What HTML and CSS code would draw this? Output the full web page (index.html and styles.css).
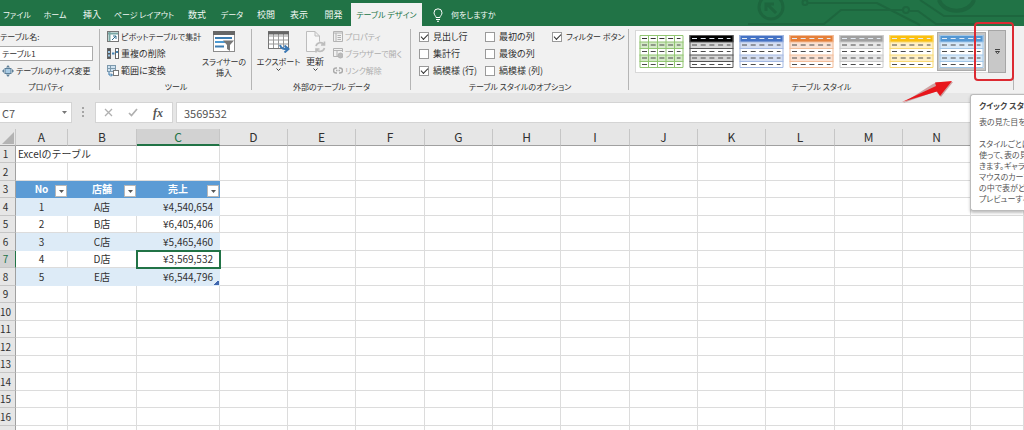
FILE: index.html
```html
<!DOCTYPE html>
<html lang="ja">
<head>
<meta charset="utf-8">
<title>Excelのテーブル</title>
<link rel="stylesheet" href="styles.css">
</head>
<body>
<svg class="defs" aria-hidden="true">
  <symbol id="swatch" viewBox="0 0 44 33">
    <rect class="sw-body" x="0" y="0" width="44" height="33"/>
    <rect class="sw-band" x="0" y="7" width="44" height="6"/>
    <rect class="sw-band" x="0" y="20" width="44" height="6"/>
    <rect class="sw-head" x="0" y="0" width="44" height="7"/>
    <path class="sw-line" d="M0 7H44M0 13.500H44M0 20H44M0 26.500H44M.5 .5H43.500V32.500H.5Z"/>
    <path class="sw-col" d="M9 0V33M18 0V33M26.500 0V33M35 0V33"/>
    <path class="sw-dash-head" d="M2.500 3.500H41" stroke-dasharray="5 3.700"/>
    <path class="sw-dash" d="M2.500 10H41M2.500 16.500H41M2.500 23H41M2.500 29.500H41" stroke-dasharray="5 3.700"/>
  </symbol>
</svg>

<header class="tabbar">
  <svg class="circuit" viewBox="0 0 284 26" aria-hidden="true">
    <g fill="none" stroke="#1d663e" stroke-width="2">
      <circle cx="31" cy="7" r="12" stroke-width="3"/>
      <path d="M36 13L27 4M26 11V4H34" stroke-width="3"/>
      <circle cx="65" cy="2.500" r="2.500"/><path d="M68 3H137L180 25"/>
      <path d="M8 24H84L101 10H162M170 11H178L196 24H236"/>
      <circle cx="166" cy="10" r="3"/>
      <path d="M180 0L204 16H284"/>
      <path d="M199 0a18 14 0 0 0 35 0" stroke-width="4"/>
    </g>
  </svg>
  <nav class="tabs">
    <button class="tab kana">ファイル</button>
    <button class="tab kana">ホーム</button>
    <button class="tab">挿入</button>
    <button class="tab kana">ページ レイアウト</button>
    <button class="tab">数式</button>
    <button class="tab kana">データ</button>
    <button class="tab">校閲</button>
    <button class="tab">表示</button>
    <button class="tab">開発</button>
    <button class="tab tab-active kana">テーブル デザイン</button>
    <button class="tab tell-me kana">
      <svg width="10" height="14" viewBox="0 0 10 14" fill="none" stroke="#fff" aria-hidden="true"><path d="M3 9.500C3 8 1 7 1 4.800a4 4 0 0 1 8 0C9 7 7 8 7 9.500ZM3 11.500H7M4 13.300H6"/></svg>
      何をしますか
    </button>
  </nav>
</header>

<section class="ribbon">
  <div class="group group-props">
    <div class="group-body stack">
      <label class="row kana" for="tname">テーブル名:</label>
      <input class="name-input kana" id="tname" value="テーブル1">
      <button class="cmd cmd-indent kana">
        <svg width="12" height="12" viewBox="0 0 12 12" aria-hidden="true"><rect x="3" y="3.500" width="6" height="5" fill="#a9cbe4" stroke="#5d7f98"/><path d="M6 0L8 2.500H4ZM6 12L4 9.500H8ZM0 6L2 4V8ZM12 6L10 4V8Z" fill="#5d7f98"/></svg>
        テーブルのサイズ変更</button>
    </div>
    <div class="caption kana">プロパティ</div>
  </div>

  <div class="group group-tools">
    <div class="group-body">
      <div class="stack">
        <button class="cmd kana">
          <svg width="12" height="12" viewBox="0 0 12 12" fill="none" aria-hidden="true"><rect x=".5" y=".5" width="11" height="10" fill="#fff" stroke="#777"/><path d="M1 2.500H11M2.500 1V10" stroke="#79a7a4" stroke-width="2"/><path d="M5 9L9 5M9 8V5H6" stroke="#35708f"/></svg>
          ピボットテーブルで集計</button>
        <button class="cmd">
          <svg width="12" height="12" viewBox="0 0 12 12" fill="none" aria-hidden="true"><rect x=".5" y=".5" width="3" height="10" fill="#555" stroke="#666"/><path d="M1 4H3M1 7.500H3" stroke="#9cc7e8" stroke-width="2"/><rect x="8.500" y=".5" width="3" height="10" fill="#fff" stroke="#666"/><path d="M9 4H11M5 5.500H7.500" stroke="#4685b5" stroke-width="2"/></svg>
          重複の削除</button>
        <button class="cmd">
          <svg width="12" height="12" viewBox="0 0 12 12" fill="none" aria-hidden="true"><rect x=".5" y=".5" width="8" height="6" fill="#cfe2f0" stroke="#7b98ac"/><path d="M1 3.500H8M3.500 1V6" stroke="#7b98ac"/><rect x="6.500" y="5.500" width="5" height="5" fill="#fff" stroke="#777"/><path d="M2 7V10H5M4 8.500L5.500 10L4 11.500" stroke="#3277ad"/></svg>
          範囲に変換</button>
      </div>
      <button class="big big-slicer kana">
        <svg width="22" height="22" viewBox="0 0 22 22" aria-hidden="true"><rect x=".5" y=".5" width="21" height="20" fill="#fff" stroke="#8c8c8c"/><rect width="22" height="4" fill="#666"/><path d="M2 7H19M2 15.500H11" stroke="#3d7db2" stroke-width="2"/><path d="M2 11H14" stroke="#4d9ad2" stroke-width="2"/><path d="M10 9.500H21L17 14V20L14 18V14Z" fill="#777"/></svg>
        <span>スライサーの<br>挿入</span>
      </button>
    </div>
    <div class="caption kana">ツール</div>
  </div>

  <div class="group group-ext">
    <div class="group-body">
      <button class="big big-export kana">
        <svg width="22" height="22" viewBox="0 0 22 22" fill="none" aria-hidden="true"><rect x=".5" y=".5" width="20" height="17" fill="#fff" stroke="#777"/><path d="M1 5H20M1 9H20M1 13H20M5.500 2V17M10.500 2V17M15.500 2V17" stroke="#999"/><path d="M0 2H21" stroke="#666" stroke-width="3"/><path d="M12 14C13 18 16 18 20 18M16.500 14.500L20.500 18L16.500 21.500" stroke="#3b78b4" stroke-width="2"/></svg>
        <span>エクスポート</span>
        <svg width="5" height="4" viewBox="0 0 5 4" fill="none" stroke="#444" aria-hidden="true"><path d="M.5 .5L2.500 2.500L4.500 .5"/></svg>
      </button>
      <button class="big big-refresh">
        <svg width="22" height="22" viewBox="0 0 22 22" fill="none" stroke="#bdbdbd" aria-hidden="true"><path d="M2.500 .5H11L15.500 5V20.500H2.500ZM11 .5V5H15.500" fill="#f7f7f7"/><circle cx="16" cy="16" r="5.500" fill="#f1f1f1" stroke="none"/><path d="M12 15a4.500 4.500 0 0 1 8-1.500M20.500 10.500V14H17M20.500 17a4.500 4.500 0 0 1-8 1.500M12 21.500V18H15.500" stroke-width="1.600"/></svg>
        <span>更新</span>
        <svg width="5" height="4" viewBox="0 0 5 4" fill="none" stroke="#444" aria-hidden="true"><path d="M.5 .5L2.500 2.500L4.500 .5"/></svg>
      </button>
      <div class="stack">
        <button class="cmd kana" disabled>
          <svg width="10" height="11" viewBox="0 0 10 11" fill="none" stroke="#b3b3b3" aria-hidden="true"><path d="M.5 .5H9.500V10.500H.5ZM.5 2H9.500M3 2V10M4.500 4.500H8M4.500 6.500H8M4.500 8.500H8"/></svg>
          プロパティ</button>
        <button class="cmd kana" disabled>
          <svg width="10" height="11" viewBox="0 0 10 11" fill="none" stroke="#b3b3b3" aria-hidden="true"><path d="M5 8.500H.5V.5H9.500V4M.5 2.500H9.500M4 2V8"/><circle cx="7.500" cy="7.500" r="2.500" fill="#bbb"/></svg>
          ブラウザーで開く</button>
        <button class="cmd kana" disabled>
          <svg width="10" height="11" viewBox="0 0 10 11" fill="none" stroke="#aaa" stroke-width="1.500" aria-hidden="true"><path d="M4 3H3a2.300 2.300 0 0 0 0 5H4M6 3H7a2.300 2.300 0 0 1 0 5H6M3 5.500H4.500M5.500 5.500H7"/></svg>
          リンク解除</button>
      </div>
    </div>
    <div class="caption kana">外部のテーブル データ</div>
  </div>

  <div class="group group-opts">
    <div class="group-body options">
      <label class="check"><input type="checkbox" checked>見出し行</label>
      <label class="check"><input type="checkbox">最初の列</label>
      <label class="check kana"><input type="checkbox" checked>フィルター ボタン</label>
      <label class="check"><input type="checkbox">集計行</label>
      <label class="check check-wide"><input type="checkbox">最後の列</label>
      <label class="check"><input type="checkbox" checked>縞模様 (行)</label>
      <label class="check check-wide"><input type="checkbox">縞模様 (列)</label>
    </div>
    <div class="caption kana">テーブル スタイルのオプション</div>
  </div>

  <div class="group group-styles">
    <div class="group-body">
      <div class="gallery">
        <button class="style-btn sw-green" aria-label="緑"><svg class="swatch"><use href="#swatch"/></svg></button>
        <button class="style-btn sw-black" aria-label="黒"><svg class="swatch"><use href="#swatch"/></svg></button>
        <button class="style-btn sw-blue" aria-label="青"><svg class="swatch"><use href="#swatch"/></svg></button>
        <button class="style-btn sw-orange" aria-label="オレンジ"><svg class="swatch"><use href="#swatch"/></svg></button>
        <button class="style-btn sw-gray" aria-label="灰色"><svg class="swatch"><use href="#swatch"/></svg></button>
        <button class="style-btn sw-gold" aria-label="ゴールド"><svg class="swatch"><use href="#swatch"/></svg></button>
        <button class="style-btn sw-sky selected" aria-label="水色"><svg class="swatch"><use href="#swatch"/></svg></button>
      </div>
      <button class="more" aria-label="クイック スタイル"><svg width="5" height="6" viewBox="0 0 5 6" fill="none" stroke="#444" aria-hidden="true"><path d="M0 .5H5M.5 2.500H4.500L2.500 4.800Z"/></svg></button>
    </div>
    <div class="caption kana">テーブル スタイル</div>
  </div>
</section>

<section class="formula-bar">
  <div class="name-box"><span>C7</span><svg width="5" height="3" viewBox="0 0 5 3" aria-hidden="true"><path d="M0 0H5L2.500 3Z" fill="#777"/></svg></div>
  <svg class="grip" width="2" height="10" viewBox="0 0 2 10" aria-hidden="true"><path d="M0 0H2V2H0ZM0 4H2V6H0ZM0 8H2V10H0Z" fill="#a5a5a5"/></svg>
  <div class="fx-box">
    <svg width="9" height="9" viewBox="0 0 9 9" fill="none" stroke="#b0b0b0" stroke-width="1.300" aria-hidden="true"><path d="M1 1L8 8M8 1L1 8"/></svg>
    <svg width="10" height="9" viewBox="0 0 10 9" fill="none" stroke="#b0b0b0" stroke-width="1.700" aria-hidden="true"><path d="M1 5L3.500 7.500L9 1"/></svg>
    <span class="fx">fx</span>
  </div>
  <input class="formula" aria-label="数式" value="3569532">
</section>

<main class="sheet">
  <table class="grid">
    <colgroup><col class="c-row"><col class="c-a"><col class="c-b"><col class="c-c"><col class="c-n"><col class="c-n"><col class="c-w"><col class="c-n"><col class="c-n"><col class="c-w"><col class="c-n"><col class="c-n"><col class="c-w"><col class="c-n"><col class="c-n"><col></colgroup>
    <thead>
      <tr><th class="corner"><svg width="12" height="12" viewBox="0 0 12 12" aria-hidden="true"><path d="M12 0V12H0Z" fill="#b3b3b3"/></svg></th><th>A</th><th>B</th><th class="col-on">C</th><th>D</th><th>E</th><th>F</th><th>G</th><th>H</th><th>I</th><th>J</th><th>K</th><th>L</th><th>M</th><th>N</th><th></th></tr>
    </thead>
    <tbody>
      <tr><th>1</th><td class="title" colspan="2">Excelのテーブル</td><td></td><td></td><td></td><td></td><td></td><td></td><td></td><td></td><td></td><td></td><td></td><td></td><td></td></tr>
      <tr><th>2</th><td></td><td></td><td></td><td></td><td></td><td></td><td></td><td></td><td></td><td></td><td></td><td></td><td></td><td></td><td></td></tr>
      <tr class="t-head"><th>3</th>
        <td><div class="head-cell"><span>No</span><button class="filter" aria-label="No フィルター"><svg width="5" height="3" viewBox="0 0 5 3"><path d="M0 0H5L2.500 3Z" fill="#555"/></svg></button></div></td>
        <td><div class="head-cell"><span>店舗</span><button class="filter" aria-label="店舗 フィルター"><svg width="5" height="3" viewBox="0 0 5 3"><path d="M0 0H5L2.500 3Z" fill="#555"/></svg></button></div></td>
        <td><div class="head-cell"><span>売上</span><button class="filter" aria-label="売上 フィルター"><svg width="5" height="3" viewBox="0 0 5 3"><path d="M0 0H5L2.500 3Z" fill="#555"/></svg></button></div></td>
        <td></td><td></td><td></td><td></td><td></td><td></td><td></td><td></td><td></td><td></td><td></td><td></td></tr>
      <tr class="band"><th>4</th><td class="mid">1</td><td class="mid">A店</td><td class="num">¥4,540,654</td><td></td><td></td><td></td><td></td><td></td><td></td><td></td><td></td><td></td><td></td><td></td><td></td></tr>
      <tr><th>5</th><td class="mid">2</td><td class="mid">B店</td><td class="num">¥6,405,406</td><td></td><td></td><td></td><td></td><td></td><td></td><td></td><td></td><td></td><td></td><td></td><td></td></tr>
      <tr class="band"><th>6</th><td class="mid">3</td><td class="mid">C店</td><td class="num">¥5,465,460</td><td></td><td></td><td></td><td></td><td></td><td></td><td></td><td></td><td></td><td></td><td></td><td></td></tr>
      <tr><th class="row-on">7</th><td class="mid">4</td><td class="mid">D店</td><td class="num active">¥3,569,532</td><td></td><td></td><td></td><td></td><td></td><td></td><td></td><td></td><td></td><td></td><td></td><td></td></tr>
      <tr class="band"><th>8</th><td class="mid">5</td><td class="mid">E店</td><td class="num last">¥6,544,796</td><td></td><td></td><td></td><td></td><td></td><td></td><td></td><td></td><td></td><td></td><td></td><td></td></tr>
      <tr><th>9</th><td></td><td></td><td></td><td></td><td></td><td></td><td></td><td></td><td></td><td></td><td></td><td></td><td></td><td></td><td></td></tr>
      <tr><th>10</th><td></td><td></td><td></td><td></td><td></td><td></td><td></td><td></td><td></td><td></td><td></td><td></td><td></td><td></td><td></td></tr>
      <tr><th>11</th><td></td><td></td><td></td><td></td><td></td><td></td><td></td><td></td><td></td><td></td><td></td><td></td><td></td><td></td><td></td></tr>
      <tr><th>12</th><td></td><td></td><td></td><td></td><td></td><td></td><td></td><td></td><td></td><td></td><td></td><td></td><td></td><td></td><td></td></tr>
      <tr><th>13</th><td></td><td></td><td></td><td></td><td></td><td></td><td></td><td></td><td></td><td></td><td></td><td></td><td></td><td></td><td></td></tr>
      <tr><th>14</th><td></td><td></td><td></td><td></td><td></td><td></td><td></td><td></td><td></td><td></td><td></td><td></td><td></td><td></td><td></td></tr>
      <tr><th>15</th><td></td><td></td><td></td><td></td><td></td><td></td><td></td><td></td><td></td><td></td><td></td><td></td><td></td><td></td><td></td></tr>
      <tr><th>16</th><td></td><td></td><td></td><td></td><td></td><td></td><td></td><td></td><td></td><td></td><td></td><td></td><td></td><td></td><td></td></tr>
      <tr><th></th><td></td><td></td><td></td><td></td><td></td><td></td><td></td><td></td><td></td><td></td><td></td><td></td><td></td><td></td><td></td></tr>
    </tbody>
  </table>
</main>

<div class="highlight"></div>
<svg class="arrow" width="52" height="24" viewBox="0 0 52 24" aria-hidden="true"><path d="M1 22L30 3.500L35 1L51 1L39 16L34 10.500Z" fill="#8b1010" opacity=".35"/><path d="M0 21L34 5L33 1.500L50 0L38 15L35 10.500Z" fill="#e8151b"/></svg>
<aside class="tooltip" role="tooltip">
  <strong class="tip-title">クイック スタ</strong>
  <p class="tip-lead">表の見た目を</p>
  <p class="tip-text">スタイルごとに<br>使って、表の見<br>きます。ギャラ<br>マウスのカーソ<br>の中で表がど<br>プレビューする</p>
</aside>
</body>
</html>
```
FILE: styles.css
```css
* { box-sizing: border-box; }

body {
  margin: 0;
  height: 100vh;
  position: relative;
  overflow: hidden;
  background: #e6e6e6;
  color: #303030;
  font: 9px/14px "Noto Sans CJK JP", sans-serif;
  font-feature-settings: "palt";
}

button, input {
  margin: 0;
  padding: 0;
  border: 0;
  background: none;
  color: inherit;
  font: inherit;
  font-feature-settings: inherit;
}

svg { display: block; flex: none; }
.defs { position: absolute; width: 0; height: 0; }

/* Labels made mostly of kana are set one step smaller */
.kana { font-size: 8px; }

/* Tabs */
.tabbar { position: relative; height: 26px; background: #217346; }
.circuit { position: absolute; right: 0; top: 0; width: 284px; height: 26px; }
.tabs {
  position: relative;
  display: grid;
  grid-template-columns: 34px 42px 32px 72px 34px 36px 32px 34px 35px 71px 84px;
  height: 100%;
  padding-top: 3px;
}
.tab { color: #f2f8f4; white-space: nowrap; }
.tab-active { background: #f1f1f1; color: #217346; }
.tell-me { display: flex; align-items: center; gap: 8px; padding-left: 11px; }

/* Ribbon */
.ribbon {
  display: flex;
  height: 67px;
  padding-top: 2px;
  background: #f1f1f1;
}
.group {
  position: relative;
  display: flex;
  flex: none;
  flex-direction: column;
}
.group::after {
  content: "";
  position: absolute;
  right: 0;
  top: 1px;
  bottom: 3px;
  width: 1px;
  background: #b5b5b5;
}
.group-body { display: flex; height: 51px; }
.caption { padding-top: 1px; text-align: center; line-height: 14px; white-space: nowrap; }
.group-props { width: 100px; }
.group-tools { width: 152px; }
.group-ext { width: 159px; }
.group-opts { width: 218px; }
.group-styles { flex: 0 1 385px; }

.stack { display: flex; flex-direction: column; }
.row, .cmd { height: 17px; line-height: 17px; white-space: nowrap; }
.cmd { display: flex; align-items: center; gap: 2px; }
.cmd:disabled { color: #adadad; }
.cmd-indent { padding-left: 2px; }
.name-input {
  width: 93px;
  height: 15px;
  margin: 1px 0;
  padding-left: 2px;
  border: 1px solid #ababab;
  border-left: 0;
  background: #fff;
}
.group-props .caption { padding-right: 8px; }
.group-tools .stack { width: 98px; padding-left: 7px; }
.big {
  display: flex;
  flex-direction: column;
  align-items: center;
  gap: 1px;
  padding-top: 3px;
  line-height: 11px;
  white-space: nowrap;
}
.big span { padding-top: 2px; }
.big-slicer { width: 52px; }
.big-export { width: 53px; }
.big-refresh { width: 20px; }
.group-ext .stack { padding-left: 8px; }

.options {
  display: grid;
  grid-template-columns: 66px 67px 1fr;
  grid-template-rows: 17px 17px 17px;
  padding-left: 8px;
}
.check { display: flex; align-items: center; gap: 4px; white-space: nowrap; }
.check-wide { grid-column: span 2; }
.check input {
  position: relative;
  flex: none;
  width: 10px;
  height: 10px;
  appearance: none;
  border: 1px solid #9a9a9a;
  background: #fff;
}
.check input:checked::after {
  content: "";
  position: absolute;
  left: 1px;
  top: 1px;
  width: 6px;
  height: 3px;
  border: solid #333;
  border-width: 0 0 1px 1px;
  transform: rotate(-45deg);
}

/* Style gallery */
.group-styles .group-body { padding: 2px 8px 6px 6px; }
.gallery {
  display: flex;
  flex: 1;
  gap: 1px;
  padding: 1px;
  border: 1px solid #d8d8d8;
  border-right: 0;
  background: #fff;
  overflow: hidden;
}
.style-btn { flex: none; padding: 3px 2px; }
.swatch { width: 45px; height: 33px; }
.style-btn.selected { background: #c6c6c6; box-shadow: inset 0 0 0 1px #ababab; }
.more {
  display: flex;
  flex: none;
  align-items: center;
  justify-content: center;
  width: 18px;
  border: 1px solid #a6a6a6;
  background: #c8c8c8;
}
.sw-body { fill: #fff; }
.sw-head { fill: var(--head); }
.sw-band { fill: var(--band); }
.sw-line { fill: none; stroke: var(--line); }
.sw-col { fill: none; stroke: var(--col, none); }
.sw-dash-head { stroke: var(--dash-head, #e4ecf5); }
.sw-dash { fill: none; stroke: #4a4a4a; }
.sw-green { --head: #fff; --band: #d5eac8; --line: #92c572; --col: #92c572; --dash-head: #333; }
.sw-black { --head: #000; --band: #d6d6d6; --line: #555; }
.sw-blue { --head: #4472c4; --band: #d6dff2; --line: #a4b9e2; }
.sw-orange { --head: #e5803a; --band: #fae2d4; --line: #f2bd99; }
.sw-gray { --head: #a0a0a0; --band: #e8e8e8; --line: #cacaca; }
.sw-gold { --head: #fabf10; --band: #fff0c8; --line: #f8d873; }
.sw-sky { --head: #5497d3; --band: #d8e9f8; --line: #a3c7e8; }

/* Formula bar */
.formula-bar {
  display: flex;
  height: 36px;
  padding: 9px 0 6px;
  font-size: 11px;
  color: #555;
}
.name-box {
  display: flex;
  align-items: center;
  justify-content: space-between;
  width: 72px;
  padding: 0 4px 0 2px;
  background: #fff;
  border: 1px solid #d4d4d4;
  border-left: 0;
}
.grip { margin: 5px 11px 0 10px; }
.fx-box {
  display: flex;
  align-items: center;
  justify-content: space-between;
  width: 78px;
  padding: 0 9px 0 8px;
  background: #fff;
  border: 1px solid #d4d4d4;
}
.fx { font: italic bold 12px/16px "Liberation Serif", serif; }
.formula {
  flex: 1;
  min-width: 0;
  margin-left: 3px;
  padding-left: 7px;
  background: #fff;
  border: 1px solid #d4d4d4;
}

/* Worksheet */
.sheet { overflow: hidden; background: #fff; }
.grid {
  width: 100%;
  table-layout: fixed;
  border-collapse: separate;
  border-spacing: 0;
  font-size: 10px;
  line-height: 14px;
  font-feature-settings: normal;
}
.c-row { width: 16px; }
.c-a { width: 52px; }
.c-b { width: 69px; }
.c-c { width: 83px; }
.c-n { width: 68px; }
.c-w { width: 69px; }
.grid th, .grid td {
  height: 17px;
  padding: 0;
  border: solid #dcdcdc;
  border-width: 0 1px 1px 0;
  white-space: nowrap;
}
.grid tbody tr:nth-child(even) > * { height: 18px; }
.grid th {
  background: #e6e6e6;
  border-color: #c6c6c6;
  font-weight: 400;
}
.grid thead th { font-size: 12px; border-bottom-color: #a0a0a0; }
.grid tbody th { padding-right: 4px; border-right-color: #a0a0a0; text-align: center; }
.grid thead .corner { padding: 2px 1px 0 2px; }
.grid thead .col-on { background: #d2d2d2; color: #217346; border-bottom: 2px solid #217346; }
.grid tbody .row-on { background: #d2d2d2; color: #217346; border-right-color: #217346; }
.grid .title { padding-left: 2px; }
.grid .mid { text-align: center; }
.grid .num { padding-right: 6px; text-align: right; }
.grid .band td:nth-child(-n+4) { background-color: #ddebf7; border-color: #ddebf7; }
.grid .t-head td:nth-child(-n+4) { background: #5b9bd5; border-color: #5b9bd5; color: #fff; font-weight: 700; }
.head-cell { display: grid; grid-template-columns: 12px 1fr 12px; align-items: center; height: 16px; }
.head-cell span { grid-column: 2; text-align: center; }
.filter {
  display: flex;
  align-items: center;
  justify-content: center;
  width: 12px;
  height: 12px;
  border: 1px solid #b8b8b8;
  background: #fff;
  align-self: end;
}
.grid .active { outline: 2px solid #217346; outline-offset: -1px; }
.grid .last {
  background-image: linear-gradient(135deg, transparent 50%, #3f66ae 50%);
  background-repeat: no-repeat;
  background-position: right bottom;
  background-size: 5px 5px;
}

/* Overlays */
.highlight {
  position: absolute;
  left: 974px;
  top: 22px;
  width: 40px;
  height: 59px;
  border: 2px solid #dc2a32;
  border-radius: 4px;
}
.arrow { position: absolute; left: 902px; top: 81px; }
.tooltip {
  position: absolute;
  left: 970px;
  right: 0;
  top: 94px;
  padding: 4px 0 6px 8px;
  border: 1px solid #bbb;
  border-right: 0;
  border-radius: 3px 0 0 3px;
  background: #fff;
  box-shadow: 0 2px 3px rgba(0, 0, 0, .25);
  color: #555;
  font-size: 8px;
  line-height: 11px;
  white-space: nowrap;
}
.tip-title { display: block; color: #444; line-height: 14px; }
.tip-lead { margin: 3px 0 11px; }
.tip-text { margin: 0; }
```
